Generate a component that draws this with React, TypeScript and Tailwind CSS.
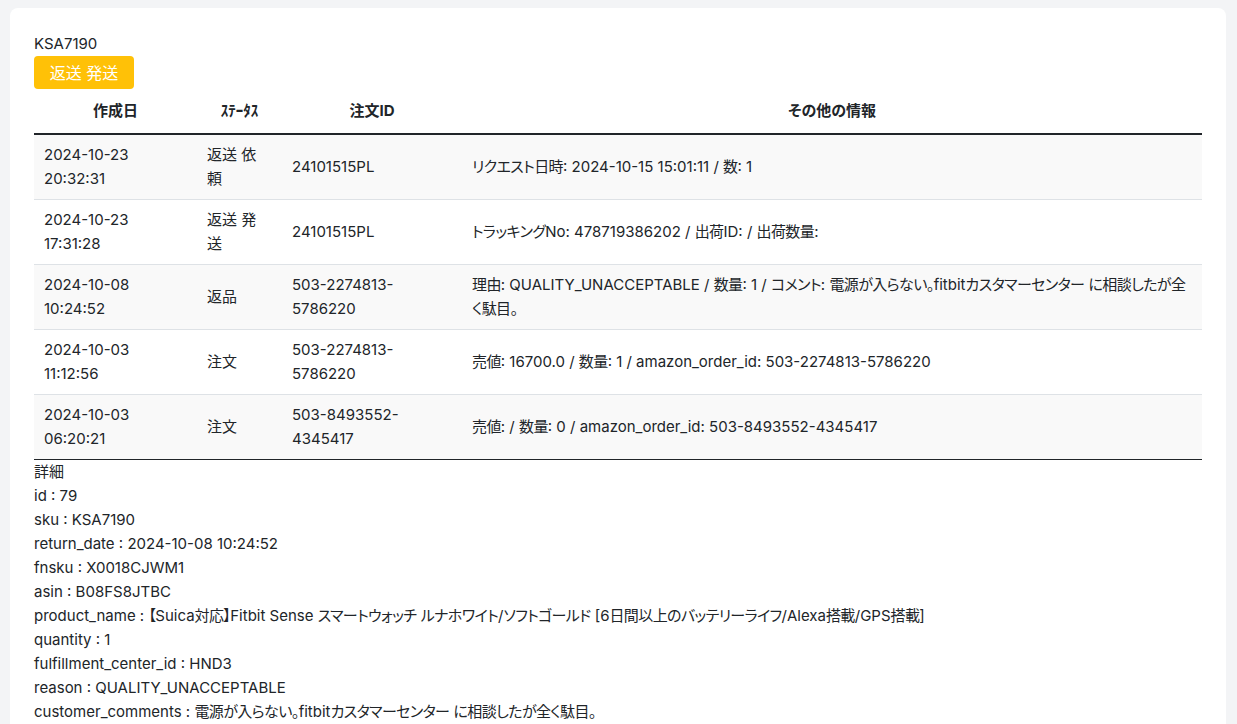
const rows = [
  {
    date: "2024-10-23",
    time: "20:32:31",
    status: "返送 依頼",
    orderId: "24101515PL",
    info: "リクエスト日時: 2024-10-15 15:01:11 / 数: 1",
  },
  {
    date: "2024-10-23",
    time: "17:31:28",
    status: "返送 発送",
    orderId: "24101515PL",
    info: "トラッキングNo: 478719386202 / 出荷ID: / 出荷数量:",
  },
  {
    date: "2024-10-08",
    time: "10:24:52",
    status: "返品",
    orderId: "503-2274813-5786220",
    info: "理由: QUALITY_UNACCEPTABLE / 数量: 1 / コメント: 電源が入らない。fitbitカスタマーセンター に相談したが全く駄目。",
  },
  {
    date: "2024-10-03",
    time: "11:12:56",
    status: "注文",
    orderId: "503-2274813-5786220",
    info: "売値: 16700.0 / 数量: 1 / amazon_order_id: 503-2274813-5786220",
  },
  {
    date: "2024-10-03",
    time: "06:20:21",
    status: "注文",
    orderId: "503-8493552-4345417",
    info: "売値: / 数量: 0 / amazon_order_id: 503-8493552-4345417",
  },
];

const details: [string, string][] = [
  ["id", "79"],
  ["sku", "KSA7190"],
  ["return_date", "2024-10-08 10:24:52"],
  ["fnsku", "X0018CJWM1"],
  ["asin", "B08FS8JTBC"],
  [
    "product_name",
    "【Suica対応】Fitbit Sense スマートウォッチ ルナホワイト/ソフトゴールド [6日間以上のバッテリーライフ/Alexa搭載/GPS搭載]",
  ],
  ["quantity", "1"],
  ["fulfillment_center_id", "HND3"],
  ["reason", "QUALITY_UNACCEPTABLE"],
  ["customer_comments", "電源が入らない。fitbitカスタマーセンター に相談したが全く駄目。"],
];

// japanese runs get slightly tighter spacing so lines wrap like the original
const CJK = /([\u3000-\u30ff\u3400-\u9fff\uff01-\uff60]+)/;
const Jp = ({ text }: { text: string }) => (
  <>
    {text.split(CJK).map((s, i) =>
      i % 2 ? (
        <span key={i} className="tracking-[-0.6px]">
          {s}
        </span>
      ) : (
        s
      )
    )}
  </>
);

const splitId = (id: string) => {
  const i = id.lastIndexOf("-");
  if (i < 0 || id.indexOf("-") === i) return [id];
  return [id.slice(0, i + 1), id.slice(i + 1)];
};

export default function App() {
  return (
    <div className="min-h-[724px] bg-[#f3f4f6] pt-2 pl-[10px] pr-[11px] font-['Inter','Noto_Sans_CJK_JP',sans-serif] text-[15px] leading-6 text-[#212529] [font-feature-settings:'palt']">
      <div className="rounded-lg bg-white px-6 pt-6 pb-6">
        <div>KSA7190</div>
        <button
          type="button"
          className="h-[33px] w-[100px] rounded bg-[#ffc107] text-[16px] text-white"
        >
          返送 発送
        </button>

        <table className="w-full table-fixed border-collapse">
          <colgroup>
            <col className="w-[163px]" />
            <col className="w-[85px]" />
            <col className="w-[180px]" />
            <col />
          </colgroup>
          <thead>
            <tr className="border-b-2 border-[#212529] text-[15px] font-bold">
              <th className="h-[45px] px-[10px] text-center">作成日</th>
              <th className="h-[45px] px-[10px] text-center">ｽﾃｰﾀｽ</th>
              <th className="h-[45px] px-[10px] text-center">注文ID</th>
              <th className="h-[45px] px-[10px] text-center">その他の情報</th>
            </tr>
          </thead>
          <tbody>
            {rows.map((r, i) => (
              <tr
                key={i}
                className={`border-b border-[#dee2e6] last:border-b-[1.5px] last:border-[#212529] ${
                  i % 2 === 0 ? "bg-[#f9f9f9]" : "bg-white"
                }`}
              >
                <td className="px-[10px] py-2 align-middle">
                  {r.date}
                  <br />
                  {r.time}
                </td>
                <td className="px-[10px] py-2 align-middle">
                  <div className="max-w-[56px]">{r.status}</div>
                </td>
                <td className="px-[10px] py-2 align-middle">
                  {splitId(r.orderId).map((p, j) => (
                    <div key={j}>{p}</div>
                  ))}
                </td>
                <td className="px-[10px] py-2 align-middle">
                  <Jp text={r.info} />
                </td>
              </tr>
            ))}
          </tbody>
        </table>

        <div>詳細</div>
        {details.map(([k, v]) => (
          <div key={k}>
            {k} : <Jp text={v} />
          </div>
        ))}
      </div>
    </div>
  );
}
